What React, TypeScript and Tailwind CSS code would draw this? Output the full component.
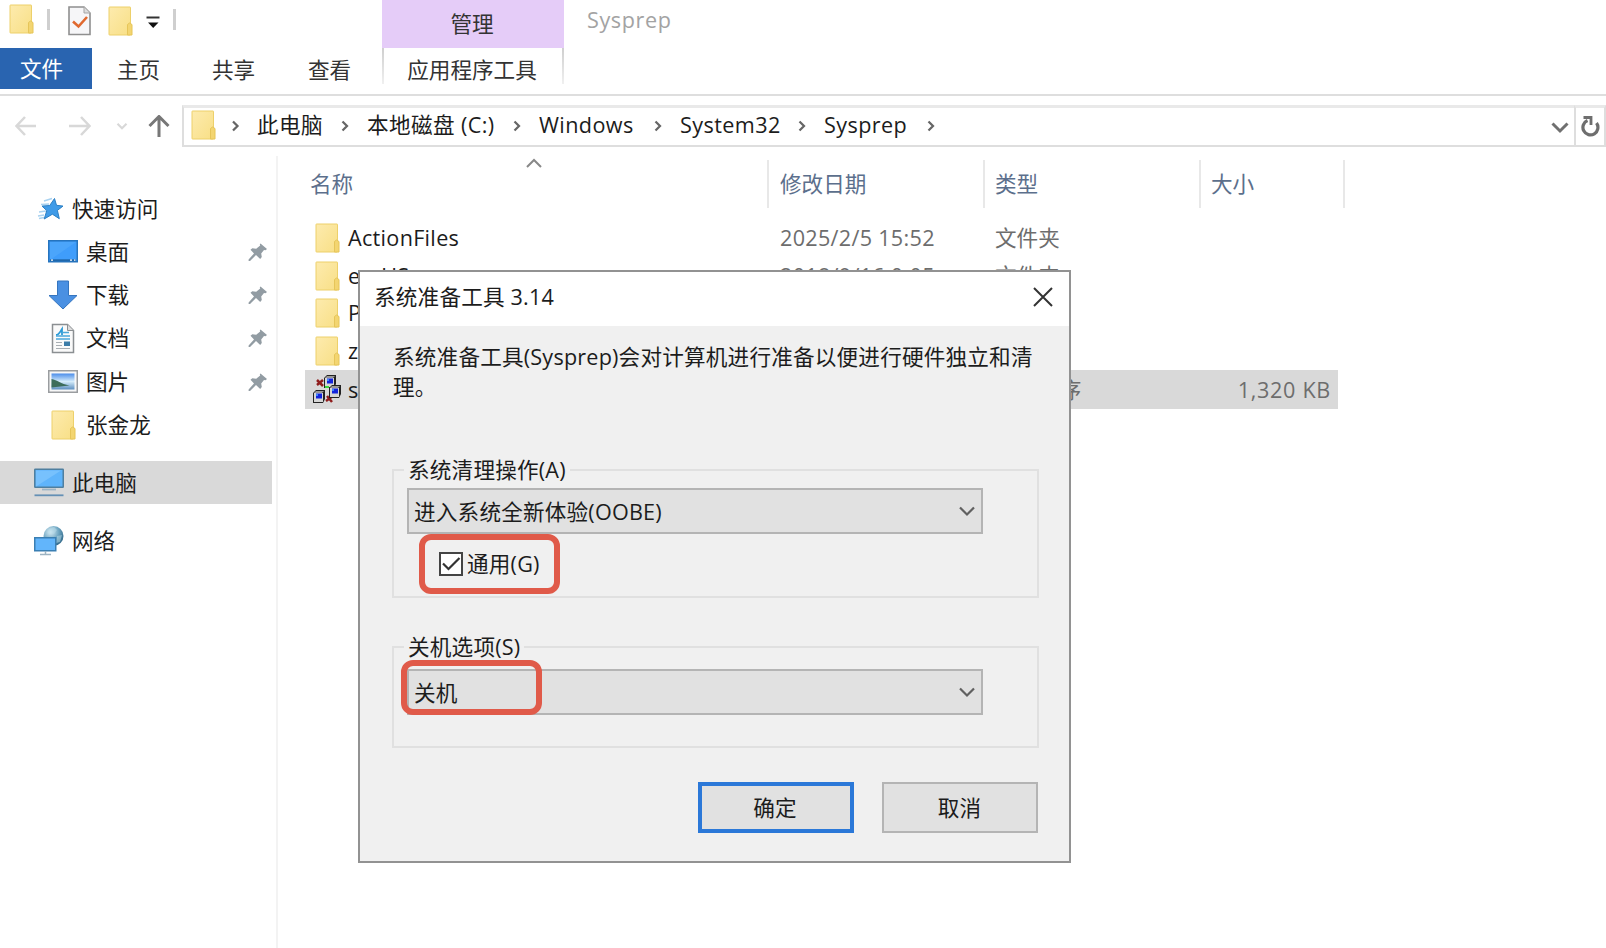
import clsx from 'clsx';
import { ReactNode } from 'react';

const Folder = ({ className }: { className?: string }) => (
  <svg className={clsx('h-[30px] w-[25px] flex-none', className)} viewBox="0 0 25 30">
    <defs>
      <linearGradient id="folder" x1="0" y1="0" x2="1" y2="1">
        <stop offset="0" stopColor="#fdebae" />
        <stop offset="1" stopColor="#f8df86" />
      </linearGradient>
    </defs>
    <rect x="1" y="1" width="21.5" height="28" rx="0.5" fill="url(#folder)" stroke="#edd06a" />
    <path d="M19.5 29V18.5l2-1.5 2.5 1.5V29z" fill="#f3d571" stroke="#e6c559" />
  </svg>
);

const Chevron = ({ d, className, width = 2 }: { d: string; className: string; width?: number }) => (
  <svg className={clsx('flex-none overflow-visible', className)} viewBox="0 0 16 16" fill="none">
    <path d={d} stroke="currentColor" strokeWidth={width} />
  </svg>
);

const Pin = () => (
  <svg className="ml-auto mr-[3px] h-[20px] w-[20px]" viewBox="0 0 20 20">
    <path
      d="M12.5 1.5l6.500 5.500-1.500 1.200-1.500-.2-2.800 3.600.6 3.400-1.600 2L8 13 2 19H.6v-1.400L6 11.500 2.500 7.800l1.800-1.500 3.900.5 4-3.300-.4-1.300z"
      fill="#929ca3"
    />
  </svg>
);

const StarIcon = () => (
  <svg className="h-[24px] w-[27px]" viewBox="0 0 27 24">
    <path d="M7 4l8-2.500M4 7.500l8-.5M2 15l7-1M1 19l6-1M2 21.500l5-1" stroke="#a9d2f0" strokeWidth="1.500" />
    <path
      d="M17.500 1.500l2 6.800 6.500.8-5.600 4.300 1.900 8.300-6.900-4.500-8.200 4.800 2.600-8.400L5 9.100l7.700-.6z"
      fill="#3f9be8"
      stroke="#2b7fc4"
    />
  </svg>
);

const DesktopIcon = () => (
  <svg className="h-[23px] w-[30px]" viewBox="0 0 30 23">
    <rect x="0.750" y="0.750" width="28.500" height="21" fill="#3f9dfb" stroke="#2674be" strokeWidth="1.500" />
    <path d="M2 20V2h26z" fill="#54aafc" opacity=".6" />
    <path d="M2 20.200h26" stroke="#1f67ab" strokeWidth="1.800" />
    <path d="M3 20.200h2M22 20.200h2M26 20.200h1.500" stroke="#fff" strokeWidth="1.300" />
  </svg>
);

const DownloadIcon = () => (
  <svg className="h-[30px] w-[30px]" viewBox="0 0 30 30">
    <path d="M9.500 1h11v14.500H29L15 29 1 15.500h8.500z" fill="#4a90e2" stroke="#3575bf" />
  </svg>
);

const DocumentIcon = () => (
  <svg className="h-[31px] w-[24px]" viewBox="0 0 24 31">
    <path d="M1.500 1.500h15l6 6v22h-21z" fill="#fafafa" stroke="#8b8f92" strokeWidth="1.500" />
    <path d="M16.500 1.500v6h6" fill="#ddd" stroke="#8b8f92" />
    <path d="M5 12c3 0 4-3 6-6v6" stroke="#2b9ad6" strokeWidth="1.800" fill="none" />
    <path d="M11 9.500h7M5 13h14M5 16h14" stroke="#4aa7da" strokeWidth="1.400" />
    <path d="M5 19.500h6M5 22.500h6M5 25.500h14" stroke="#a8aeb3" strokeWidth="1.200" />
    <rect x="13" y="18.500" width="6" height="4.500" fill="#3b7ca8" />
  </svg>
);

const PictureIcon = () => (
  <svg className="h-[23px] w-[30px]" viewBox="0 0 30 23">
    <defs>
      <linearGradient id="sky" x1="0" y1="0" x2="0" y2="1">
        <stop offset="0" stopColor="#4b8dea" />
        <stop offset=".5" stopColor="#d5ecfa" />
        <stop offset="1" stopColor="#5d8fc0" />
      </linearGradient>
    </defs>
    <rect x="0.750" y="0.750" width="28.500" height="21.500" fill="#f7f7f7" stroke="#9a9da0" strokeWidth="1.500" />
    <rect x="3.500" y="3.500" width="23" height="16" fill="url(#sky)" />
    <path d="M3.500 9c6 1 9 5 18 6.500l-18 2z" fill="#3d6d5b" />
  </svg>
);

const ComputerIcon = () => (
  <svg className="h-[29px] w-[30px]" viewBox="0 0 30 29">
    <rect x="0.750" y="1.250" width="28.500" height="18" rx=".5" fill="#5fb4fb" stroke="#4f7f9f" strokeWidth="1.500" />
    <path d="M2 18.500V2.500h25z" fill="#87caff" opacity=".6" />
    <path d="M8 21.500h14" stroke="#9cb4c4" strokeWidth="1.800" />
    <path d="M0.500 27.300h29" stroke="#6490b5" strokeWidth="1.800" />
  </svg>
);

const NetworkIcon = () => (
  <svg className="h-[31px] w-[30px]" viewBox="0 0 30 31">
    <defs>
      <radialGradient id="globe" cx=".35" cy=".3" r=".75">
        <stop offset="0" stopColor="#d9edf5" />
        <stop offset=".55" stopColor="#6fa6c2" />
        <stop offset="1" stopColor="#2f6788" />
      </radialGradient>
    </defs>
    <circle cx="19.500" cy="11" r="10" fill="url(#globe)" />
    <path d="M15 4l5-2 3 3-3 4-5-1zM23 11l5-1-2 7-4 1z" fill="#b8dcea" opacity=".5" />
    <rect x="0.750" y="12.750" width="21" height="13" fill="#62b5fb" stroke="#3a7fb3" strokeWidth="1.500" />
    <path d="M11.500 26v3M6 29.500h11" stroke="#9db3c2" strokeWidth="1.500" />
  </svg>
);

const Pc = ({ x, y }: { x: number; y: number }) => (
  <g transform={`translate(${x} ${y})`}>
    <path d="M0 3l3-3h9v9l-2 4H0z" fill="#222" />
    <path d="M1 3l2-2h8l-2 2z" fill="#999" />
    <rect x="1" y="3" width="9" height="9" fill="#d6d6d6" />
    <rect x="3" y="3.500" width="6" height="5" fill="#1324dc" />
    <rect x="3" y="4" width="2" height="2" fill="#3c86ff" />
  </g>
);

const SysprepIcon = () => (
  <svg className="h-[30px] w-[30px]" viewBox="0 0 30 30">
    <path d="M5 5l6 6M5 10l6-5M14 26l7-5M15 21l5 6" stroke="#8f1d1d" strokeWidth="2.500" />
    <Pc x={12} y={0} />
    <Pc x={17} y={10} />
    <Pc x={1} y={15} />
    <path d="M13 12h4" stroke="#3fd63f" strokeWidth="2" />
  </svg>
);

const crumbs = [
  { name: '此电脑', width: 'w-[84px]' },
  { name: '本地磁盘 (C:)', width: 'w-[146px]' },
  { name: 'Windows', width: 'w-[115px]' },
  { name: 'System32', width: 'w-[118px]' },
  { name: 'Sysprep', width: 'w-[103px]' }
];

const places: { name: string; icon: ReactNode; pinned: boolean }[] = [
  { name: '桌面', icon: <DesktopIcon />, pinned: true },
  { name: '下载', icon: <DownloadIcon />, pinned: true },
  { name: '文档', icon: <DocumentIcon />, pinned: true },
  { name: '图片', icon: <PictureIcon />, pinned: true },
  { name: '张金龙', icon: <Folder className="ml-[1px]" />, pinned: false }
];

const files = [
  { name: 'ActionFiles', date: '2025/2/5 15:52', type: '文件夹', size: '', folder: true },
  { name: 'en-US', date: '2018/9/16 0:05', type: '文件夹', size: '', folder: true },
  { name: 'P', date: '', type: '', size: '', folder: true },
  { name: 'z', date: '', type: '', size: '', folder: true },
  { name: 'sy', date: '', type: '应用程序', size: '1,320 KB', folder: false }
];

const Ribbon = () => (
  <header className="flex h-[94px] flex-none">
    <div className="w-[382px]">
      <div className="flex h-12 items-start">
        <Folder className="ml-[9px] mt-[4px]" />
        <span className="ml-[13px] mt-[9px] h-[21px] w-[3px] bg-[#cfcfcf]" />
        <svg className="ml-[18px] mt-[6px] h-[30px] w-[23px]" viewBox="0 0 23 30">
          <path d="M1 1h15l6 6v21.500H1z" fill="#f6f6f8" stroke="#8f8f8f" strokeWidth="1.600" />
          <path d="M16 1v6h6" fill="#ddd" stroke="#a5a5a5" />
          <path d="M5 15.500l5.500 5L19 11" fill="none" stroke="#e0692f" strokeWidth="2.600" />
        </svg>
        <Folder className="ml-[17px] mt-[6px]" />
        <svg className="ml-[13px] mt-[15px] h-[14px] w-[14px]" viewBox="0 0 14 14">
          <path d="M0.500 2.500h13" stroke="#333" strokeWidth="2" />
          <path d="M2 7.500h10.500L7.200 13z" fill="#111" />
        </svg>
        <span className="ml-[13px] mt-[9px] h-[21px] w-[3px] bg-[#cfcfcf]" />
      </div>
      <nav className="flex h-[41px] items-center text-[#333]">
        <div className="flex h-full w-[92px] items-center bg-[#2964b0] pl-5 text-white">文件</div>
        <div className="w-[95px] pl-[25px] pt-[2px]">主页</div>
        <div className="w-[95px] pl-[25px] pt-[2px]">共享</div>
        <div className="w-[95px] pl-[26px] pt-[2px]">查看</div>
      </nav>
    </div>
    <div className="w-[182px] text-[#333]">
      <div className="flex h-12 items-center justify-center bg-[#e5ccf8] pb-[1px] pr-[2px]">管理</div>
      <div className="flex h-[36px]">
        <span className="w-[2px] bg-gradient-to-b from-[#cfcfcf] to-[#f0f0f0]" />
        <div className="flex h-[41px] flex-1 items-center justify-center pr-[2px] pt-[2px]">应用程序工具</div>
        <span className="w-[2px] bg-gradient-to-b from-[#cfcfcf] to-[#f0f0f0]" />
      </div>
    </div>
    <div className="ml-[23px] mt-[5px] h-[30px] text-[#a3a3a3] tracking-[0.600px]">Sysprep</div>
  </header>
);

const AddressBar = () => (
  <div className="flex h-[62px] flex-none items-start border-t-2 border-[#dedede] text-[#1c1c1c]">
    <div className="flex h-[60px] w-[182px] items-center text-[#d8d8d8]">
      <svg className="ml-[15px] h-[22px] w-[22px]" viewBox="0 0 22 22" fill="none">
        <path d="M21 11H2M10 2L1.500 11l8.500 9" stroke="currentColor" strokeWidth="2.500" />
      </svg>
      <svg className="ml-[32px] h-[22px] w-[22px]" viewBox="0 0 22 22" fill="none">
        <path d="M0 11h20M12 2l8.500 9-8.500 9" stroke="currentColor" strokeWidth="2.500" />
      </svg>
      <Chevron className="ml-[25px] h-[12px] w-[12px]" d="M2 5l6 6 6-6" width={2.800} />
      <svg className="ml-[20px] h-[22px] w-[22px] text-[#777]" viewBox="0 0 22 22" fill="none">
        <path d="M11 22V2M1.500 11L11 1.500l9.500 9.500" stroke="currentColor" strokeWidth="3" />
      </svg>
    </div>
    <div className="mt-[9px] flex h-[42px] flex-1 items-center border-2 border-t-[3px] border-r-0 border-[#dedede] border-t-[#e9e9e9]">
      <Folder className="ml-[7px] mt-[-4px]" />
      <Chevron className="ml-[14px] mt-[-2px] h-[12px] w-[12px] text-[#666]" d="M4 2l6 6-6 6" width={3} />
      <div className="ml-[15px] flex pb-[4px]">
        {crumbs.map((c) => (
          <div key={c.name} className="mr-[26px] flex items-center last:mr-0">
            <span className={clsx('whitespace-nowrap tracking-[0.400px]', c.width)}>{c.name}</span>
            <Chevron className="-mr-[12px] mt-[2px] h-[12px] w-[12px] text-[#666]" d="M2 2l6 6-6 6" width={3} />
          </div>
        ))}
      </div>
      <Chevron className="ml-auto mr-[6px] h-[16px] w-[16px] text-[#707070]" d="M0.500 4.500l7.500 7.500 7.500-7.500" width={3} />
    </div>
    <div className="mt-[9px] flex h-[42px] w-[32px] items-center justify-center border-2 border-t-[3px] border-[#dedede] border-t-[#e9e9e9] pb-[2px]">
      <svg className="h-[22px] w-[20px]" viewBox="0 0 20 22" fill="none">
        <path d="M16.500 8a7.500 7.500 0 1 1-9-2.500" stroke="#6e6e6e" strokeWidth="3.200" />
        <path d="M3.500 2.500h7.500v7.500" stroke="#6e6e6e" strokeWidth="2.800" />
      </svg>
    </div>
  </div>
);

const Sidebar = () => (
  <aside className="w-[278px] flex-none border-r-2 border-[#f3f3f3] pt-[31px] text-[#1c1c1c]">
    <div className="flex h-[43px] items-center">
      <span className="w-[72px] pl-[37px]">
        <StarIcon />
      </span>
      快速访问
    </div>
    {places.map((p) => (
      <div key={p.name} className="flex h-[43.300px] items-center pr-[5px]">
        <span className="ml-[48px] flex w-[38px] justify-start">
          <span className="flex w-[30px] justify-center">{p.icon}</span>
        </span>
        {p.name}
        {p.pinned && <Pin />}
      </div>
    ))}
    <div className="mt-[15px] flex h-[43px] w-[272px] items-center bg-[#d9d9d9]">
      <span className="w-[72px] pl-[34px]">
        <ComputerIcon />
      </span>
      此电脑
    </div>
    <div className="mt-[15px] flex h-[43px] items-center">
      <span className="w-[72px] pl-[34px]">
        <NetworkIcon />
      </span>
      网络
    </div>
  </aside>
);

const FileList = () => (
  <main className="flex-1 pl-[27px] pt-[4px]">
    <div className="flex h-[48px] items-center text-[#5c6f8c]">
      <div className="relative flex h-full w-[464px] items-center border-r-2 border-[#e8e8e8] pl-[5px]">
        名称
        <Chevron className="absolute left-[221px] top-[-4px] h-[16px] w-[16px] text-[#888]" d="M1 11l7-7 7 7" />
      </div>
      <div className="flex h-full w-[216px] items-center border-r-2 border-[#e8e8e8] pl-[11px]">修改日期</div>
      <div className="flex h-full w-[216px] items-center border-r-2 border-[#e8e8e8] pl-[10px]">类型</div>
      <div className="flex h-full w-[144px] items-center border-r-2 border-[#e8e8e8] pl-[10px]">大小</div>
    </div>
    <div className="mt-[11px] w-[1033px] tracking-[0.300px]">
      {files.map((f) => (
        <div
          key={f.name}
          className={clsx('flex items-center text-[#6d6d6d]', f.folder ? 'h-[37.750px]' : 'h-[39px] bg-[#d9d9d9]')}
        >
          <div className="flex w-[475px] items-center text-[#1c1c1c]">
            <span className={clsx('w-[43px]', f.folder ? 'pl-[10px]' : 'pl-[7px]')}>
              {f.folder ? <Folder /> : <SysprepIcon />}
            </span>
            {f.name}
          </div>
          <div className="w-[215px]">{f.date}</div>
          <div className="w-[216px] tracking-normal">{f.type}</div>
          <div className="flex-1 pr-[7px] text-right tracking-[0.700px]">{f.size}</div>
        </div>
      ))}
    </div>
  </main>
);

const Select = ({ value }: { value: string }) => (
  <div className="flex h-[46px] w-[576px] items-center border-2 border-[#b4b4b4] bg-[#e1e1e1] pl-[5px] pr-[6px]">
    <span className="pt-[1px]">{value}</span>
    <Chevron className="ml-auto h-[16px] w-[16px] text-[#606060]" d="M1 4.500l7 7 7-7" width={2.200} />
  </div>
);

const Group = ({ legend, className, children }: { legend: string; className: string; children: ReactNode }) => (
  <div className={clsx('relative w-[647px] border-2 border-[#e0e0e0] pl-[13px]', className)}>
    <span className="absolute -top-[16px] left-[10px] bg-[#f0f0f0] px-1 leading-[30px]">{legend}</span>
    {children}
  </div>
);

const Dialog = () => (
  <div className="absolute left-[358px] top-[270px] flex h-[593px] w-[713px] flex-col border-2 border-[#929292] bg-[#f0f0f0] tracking-[0.200px] text-[#1c1c1c]">
    <div className="flex h-[54px] flex-none items-center bg-white pb-[4px] pl-[14px] pr-[16px]">
      系统准备工具 3.14
      <svg className="ml-auto h-[20px] w-[20px]" viewBox="0 0 20 20">
        <path d="M1 1l18 18M19 1L1 19" stroke="#333" strokeWidth="2" />
      </svg>
    </div>
    <div className="flex flex-1 flex-col pl-[32px] pr-[31px]">
      <p className="mt-[16px] h-[60px] w-[650px] pl-[1px] leading-[30px]">
        系统准备工具(Sysprep)会对计算机进行准备以便进行硬件独立和清理。
      </p>
      <Group legend="系统清理操作(A)" className="mt-[67px] h-[129px] pt-[17px]">
        <Select value="进入系统全新体验(OOBE)" />
        <div className="ml-[12px] flex h-[60px] w-[141px] items-center rounded-[12px] border-[6px] border-[#e05a49] pl-[14px]">
          <svg className="h-[24px] w-[24px] flex-none" viewBox="0 0 24 24">
            <rect x="1" y="1" width="22" height="22" fill="#fff" stroke="#444" strokeWidth="2" />
            <path d="M4 11.500l5.500 5.500L20.500 6" fill="none" stroke="#333" strokeWidth="2.200" />
          </svg>
          <span className="ml-[4px]">通用(G)</span>
        </div>
      </Group>
      <Group legend="关机选项(S)" className="mt-[48px] h-[102px] pt-[21px]">
        <Select value="关机" />
        <span className="absolute left-[7px] top-[12px] h-[55px] w-[141px] rounded-[12px] border-[6px] border-[#e05a49]" />
      </Group>
      <div className="mt-[34px] flex justify-end gap-[28px]">
        <button className="h-[51px] w-[156px] border-[4px] border-[#2b78d8] bg-[#e1e1e1] pr-[2px]">确定</button>
        <button className="h-[51px] w-[156px] border-2 border-[#b4b4b4] bg-[#e1e1e1] pr-[1px]">取消</button>
      </div>
    </div>
  </div>
);

export default function App() {
  return (
    <div className="relative flex h-[948px] w-[1606px] flex-col overflow-hidden bg-white font-['Open_Sans','Noto_Sans_CJK_SC',sans-serif] text-[21.600px] leading-[30px]">
      <Ribbon />
      <AddressBar />
      <div className="flex flex-1">
        <Sidebar />
        <FileList />
      </div>
      <Dialog />
    </div>
  );
}
